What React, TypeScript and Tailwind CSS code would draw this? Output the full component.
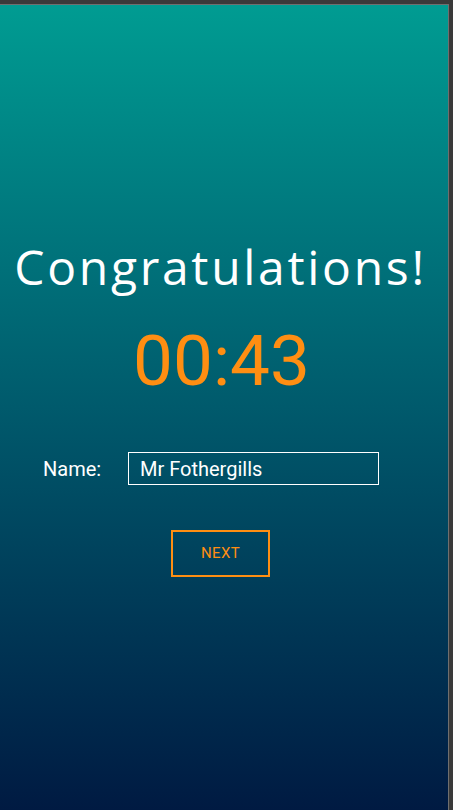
import React, { useState } from "react";

const App: React.FC = () => {
  const [name, setName] = useState("Mr Fothergills");

  return (
    <div className="w-[453px] h-[810px] bg-[#3a3a3a] pt-[4px] pr-[4px] flex">
      <div className="flex-1 flex flex-col items-center border-t border-r border-[#6f6f6f] bg-linear-to-b from-[#009c92] via-[#005a6c] to-[#001a42] font-['Roboto',sans-serif]">
        {/* Title */}
        <h1 className="mt-[230px] ml-[-7px] text-[48px] leading-[64px] text-white font-['Open_Sans',sans-serif] font-medium tracking-[2.7px]">
          Congratulations!
        </h1>

        {/* Timer */}
        <div className="mt-[22px] ml-[-5px] text-[71px] leading-[80px] text-[#ff8e12]">00:43</div>

        {/* Name */}
        <div className="mt-[51px] flex items-center w-full pl-[43px]">
          <label className="text-[20px] text-white w-[85px]">Name:</label>
          <input
            value={name}
            onChange={(e) => setName(e.target.value)}
            className="w-[251px] h-[33px] border border-white bg-transparent px-[11px] text-[20px] text-white outline-none"
          />
        </div>

        {/* Next */}
        <button className="mt-[45px] ml-[-7px] w-[99px] h-[47px] border-2 border-[#ff8e12] text-[15px] text-[#ff8e12] tracking-[0.3px]">
          NEXT
        </button>
      </div>
    </div>
  );
};

export default App;
